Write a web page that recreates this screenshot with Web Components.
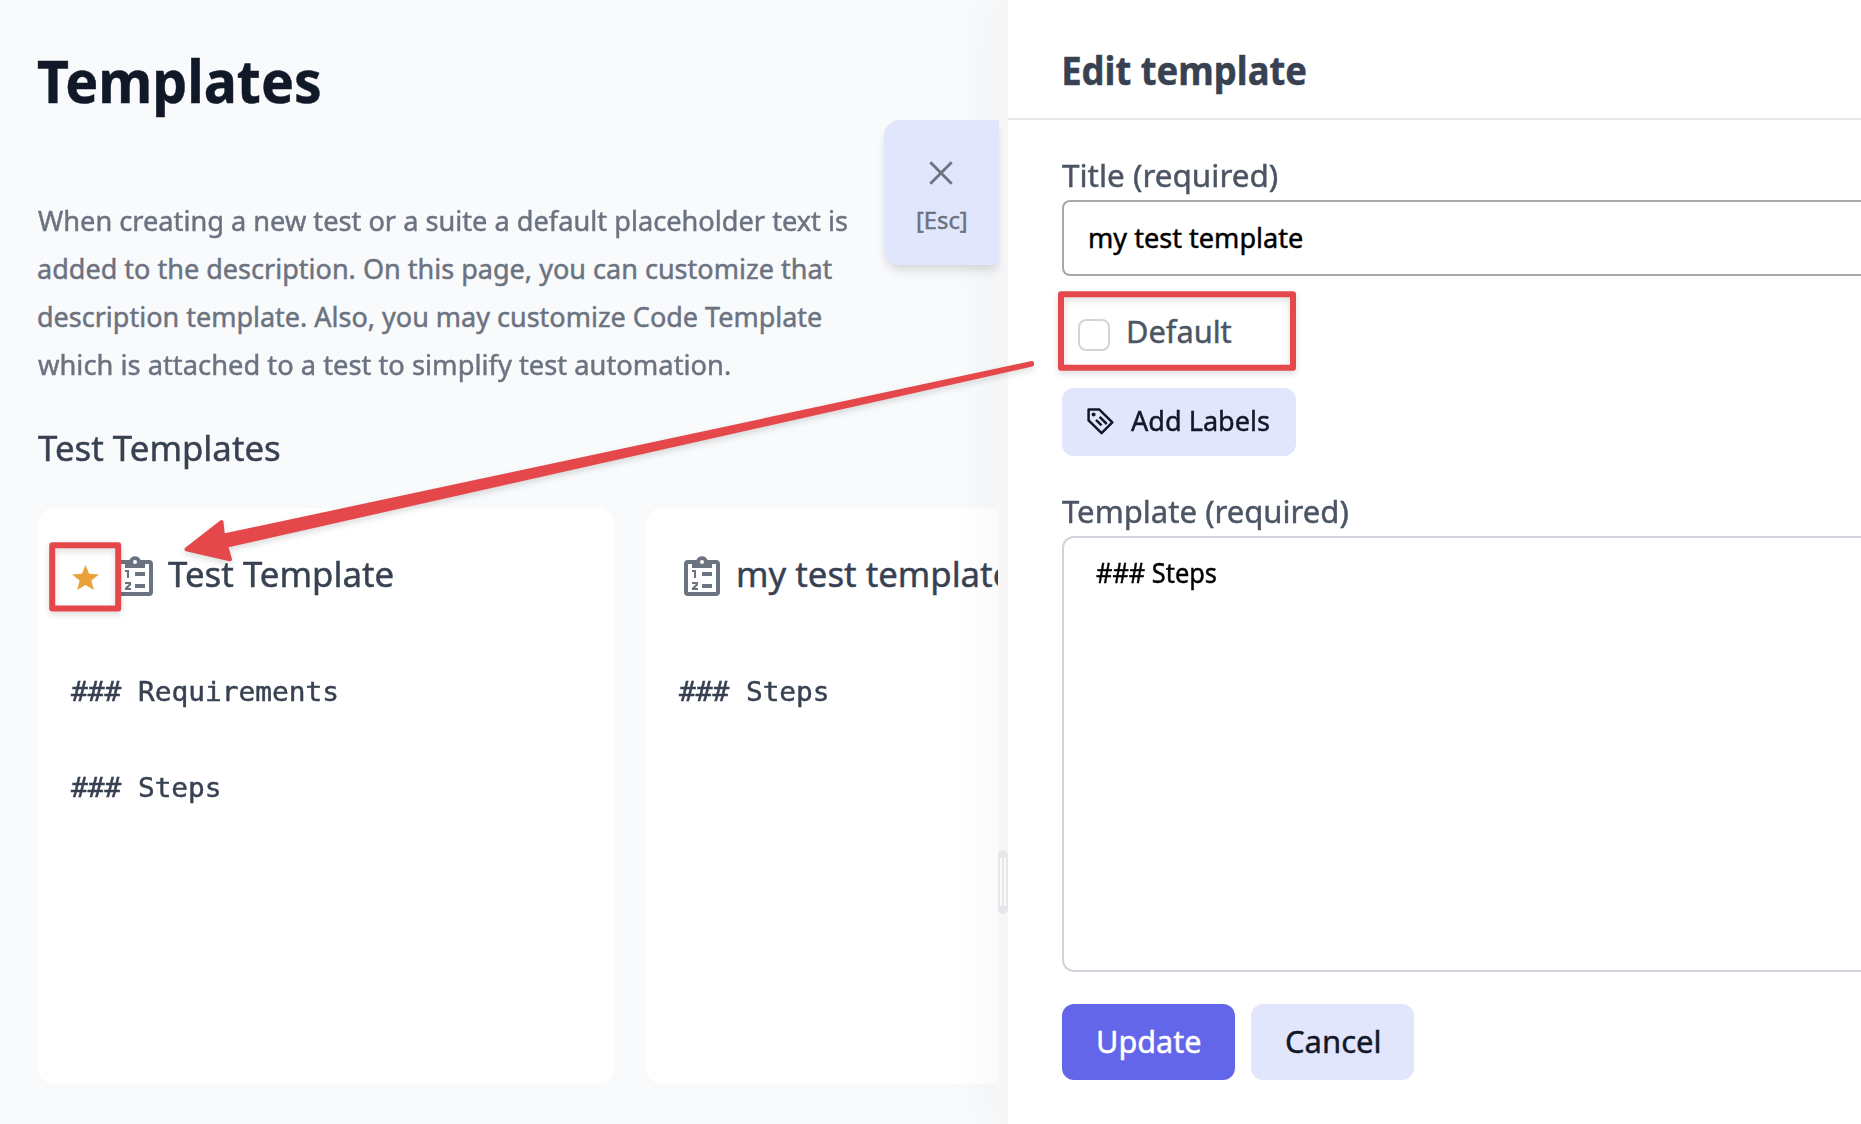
<!DOCTYPE html>
<html lang="en">
<head>
<meta charset="utf-8">
<title>Templates</title>
<style>
html,body{margin:0;height:100%;overflow:hidden;background:#f9fafc;font-family:"Noto Sans","Open Sans",sans-serif}
</style>
</head>
<body>
<templates-app></templates-app>
<script>
const define = (name, html, init) => {
  const tpl = document.createElement('template');
  tpl.innerHTML = html;
  customElements.define(name, class extends HTMLElement {
    connectedCallback() {
      if (this.shadowRoot) return;
      this.attachShadow({mode: 'open'}).append(tpl.content.cloneNode(true));
      if (init) init.call(this, this.shadowRoot);
    }
  });
};

/* One line of text whose inked area starts at the host's left edge and is `w` pixels wide. */
const pen = document.createElement('canvas').getContext('2d');
define('ui-text', `<style>
:host{display:block;white-space:pre;flex:none;-webkit-text-stroke:.45px currentColor}
span{display:inline-block;transform-origin:0 50%;vertical-align:top}
</style><span><slot></slot></span>`, function (root) {
  const w = +this.getAttribute('w'), size = +this.getAttribute('size');
  const weight = this.getAttribute('weight') || 400;
  const family = this.hasAttribute('mono') ? '"DejaVu Sans Mono", monospace' : '"Noto Sans", "Open Sans", sans-serif';
  this.style.cssText = `width:${w}px;font:${weight} ${size}px ${family};line-height:${this.getAttribute('lh')}px`;
  pen.font = `${weight} ${size}px ${family}`;
  const m = pen.measureText(this.textContent);
  const k = w / (m.actualBoundingBoxLeft + m.actualBoundingBoxRight);
  root.querySelector('span').style.transform = `translateX(${m.actualBoundingBoxLeft * k}px) scaleX(${k})`;
});

define('icon-clipboard', `<style>:host{display:block;width:36px;height:40px;flex:none;color:#6b7280}svg{display:block}</style>
<svg width="36" height="40" viewBox="0 0 36 40" fill="none">
<path fill="currentColor" fill-rule="evenodd" d="M4 4H12.4A6 6 0 0 1 23.6 4H32A4 4 0 0 1 36 8V36A4 4 0 0 1 32 40H4A4 4 0 0 1 0 36V8A4 4 0 0 1 4 4ZM18 4A2 2 0 1 0 18 8A2 2 0 1 0 18 4ZM4 8V36H32V8H28V12H8V8Z"/>
<path fill="currentColor" d="M18 16H28V20H18ZM18 28H28V32H18Z"/>
<path stroke="currentColor" stroke-width="2.1" d="M8 15H11V22M8 27H13V28.5L9 32.5V33H14"/>
</svg>`);

define('icon-star', `<style>:host{display:block;width:27px;height:25px;flex:none}svg{display:block}</style>
<svg width="27" height="25" viewBox="0 0 27 25"><path fill="#e9a23b" d="M13.5 0L17.1 8.8L27 9.5L19.4 15.6L21.8 25L13.5 19.9L5.2 25L7.6 15.6L0 9.5L9.9 8.8Z"/></svg>`);

define('icon-tag', `<style>:host{display:block;width:28px;height:28px;flex:none}svg{display:block}</style>
<svg width="28" height="28" viewBox="0 0 28 28" fill="none" stroke="#111827" stroke-width="2.5" stroke-linejoin="round">
<path d="M2.6 2.6H13.4L26.3 15.4L15.6 26.2L2.6 13.4Z"/><circle cx="7.6" cy="7.4" r="2" fill="#111827" stroke="none"/>
<path d="M10 12.8L15.6 18.4M13.6 9.8L20.8 17"/></svg>`);

define('icon-close', `<style>:host{display:block;width:24px;height:24px}svg{display:block}</style>
<svg width="24" height="24" viewBox="0 0 24 24" stroke="#6b7280" stroke-width="2.8"><path d="M1.3 1.3L22.7 22.7M22.7 1.3L1.3 22.7"/></svg>`);

define('template-card', `<style>
:host{display:block;box-sizing:border-box;width:576px;height:576px;flex:none;background:#fff;border-radius:16px;padding:42px 0 0 33px;color:#374151}
header{display:flex;height:48px;align-items:flex-start}
.body{margin-top:70.5px}
</style><header><slot name="title"></slot></header><div class="body"><slot></slot></div>`);

define('ui-button', `<style>
:host{display:flex;align-items:center;box-sizing:border-box;flex:none;border-radius:12px;background:#e1e6fd;color:#111827}
:host([primary]){background:#6366e9;color:#fff}
</style><slot></slot>`);

define('templates-page', `<style>
:host{display:block;box-sizing:border-box;width:998px;flex:none;overflow:hidden;padding:43.5px 0 0 38px}
.title{color:#111827}
.intro{margin-top:81.5px;color:#6b7280}
.sub{margin-top:35.4px;color:#374151}
.cards{display:flex;gap:32px;margin-top:35.6px}
icon-star{margin:15.5px 18px 0 1.3px}
.a{margin:6px 15px 0 0}
.b{margin:6px 18px 0 5px}
.gap{height:48px}
</style>
<ui-text class="title" w="281.5" size="58.5" weight="700" lh="72">Templates</ui-text>
<div class="intro">
<ui-text w="809" size="27.2" lh="48">When creating a new test or a suite a default placeholder text is</ui-text>
<ui-text w="794.5" size="27.2" lh="48">added to the description. On this page, you can customize that</ui-text>
<ui-text w="783" size="27.2" lh="48">description template. Also, you may customize Code Template</ui-text>
<ui-text w="692" size="27.2" lh="48">which is attached to a test to simplify test automation.</ui-text>
</div>
<ui-text class="sub" w="242" size="35" lh="48">Test Templates</ui-text>
<div class="cards">
<template-card>
<icon-star slot="title"></icon-star><icon-clipboard class="a" slot="title"></icon-clipboard>
<ui-text slot="title" w="224.5" size="35" lh="48">Test Template</ui-text>
<ui-text mono w="266" size="26.5" lh="48">### Requirements</ui-text>
<div class="gap"></div>
<ui-text mono w="148.5" size="26.5" lh="48">### Steps</ui-text>
</template-card>
<template-card>
<icon-clipboard class="b" slot="title"></icon-clipboard>
<ui-text slot="title" w="272.5" size="35" lh="48">my test template</ui-text>
<ui-text mono w="148.5" size="26.5" lh="48">### Steps</ui-text>
</template-card>
</div>`);

define('esc-tab', `<style>
:host{display:flex;flex-direction:column;align-items:center;box-sizing:border-box;width:115px;height:145px;padding:41px 1px 0 0;background:#e1e6fd;border-radius:16px 0 0 16px;color:#6b7280;
box-shadow:0 8px 12px -2px rgba(0,0,0,.1),0 4px 8px -2px rgba(0,0,0,.06)}
ui-text{margin-top:19px}
</style><icon-close></icon-close><ui-text w="49" size="23.3" lh="33">[Esc]</ui-text>`);

define('drag-gutter', `<style>
:host{display:flex;flex-direction:column;box-sizing:border-box;width:10px;flex:none;padding-top:850px;background:#f7f7f7;box-shadow:0 0 50px rgba(0,0,0,.12)}
.grip{display:flex;gap:2px;box-sizing:border-box;height:64px;padding:8px 2px;border-radius:5px;background:#e5e7eb}
i{width:2px;background:#fafafa}
</style><div class="grip"><i></i><i></i></div>`);

define('edit-panel', `<style>
:host{display:flex;flex-direction:column;flex:1;min-width:0;overflow:hidden;background:#fff;color:#4b5563}
header{box-sizing:border-box;height:120px;flex:none;padding:46px 0 0 56px;border-bottom:2px solid #e5e7eb;color:#374151}
.form{display:flex;flex-direction:column;align-items:flex-start;padding:34.7px 0 0 54px}
.field{box-sizing:border-box;align-self:stretch;border:2px solid #a8a8a8;border-right:0;color:#000}
.input{height:76px;margin-top:5.3px;border-radius:8px 0 0 8px;padding:12.5px 0 0 26px}
.area{height:436px;margin-top:5.3px;border-color:#d1d5db;border-radius:12px 0 0 12px;padding:11.5px 0 0 31.5px}
.check{display:flex;margin:34.7px 0 0 16px;height:40px;gap:19px}
.box{box-sizing:border-box;width:32px;height:32px;margin-top:8.3px;border:2px solid #d1d5db;border-radius:8px}
.labels{width:234px;height:68px;margin-top:37.3px;padding:0 0 1.6px 23.5px}
.labels ui-text{margin-left:17.5px}
.second{margin-top:34.7px}
footer{display:flex;gap:16px;margin-top:32px}
footer ui-button{height:76px}
</style>
<header><ui-text w="242" size="38.8" weight="700" lh="48">Edit template</ui-text></header>
<div class="form">
<ui-text w="216" size="31" lh="40">Title (required)</ui-text>
<div class="field input"><ui-text w="212" size="27.2" lh="48">my test template</ui-text></div>
<div class="check"><div class="box"></div><ui-text w="102.5" size="31" lh="40">Default</ui-text></div>
<ui-button class="labels"><icon-tag></icon-tag><ui-text w="138" size="27.2" lh="48">Add Labels</ui-text></ui-button>
<ui-text class="second" w="286.5" size="31" lh="40">Template (required)</ui-text>
<div class="field area"><ui-text w="120" size="27.2" lh="48">### Steps</ui-text></div>
<footer>
<ui-button primary style="width:173px;padding:0 0 1px 36px"><ui-text w="102" size="31" lh="40">Update</ui-text></ui-button>
<ui-button style="width:163px;padding:0 0 1px 35px"><ui-text w="93.5" size="31" lh="40">Cancel</ui-text></ui-button>
</footer>
</div>`);

define('callout-marks', `<style>:host{display:block;pointer-events:none}svg{display:block;filter:drop-shadow(0 3px 3px rgba(0,0,0,.14))}</style>
<svg width="1861" height="1124" viewBox="0 0 1861 1124" fill="none" stroke="#e5484b" stroke-linejoin="round">
<rect x="52.2" y="545.2" width="66" height="63.4" stroke-width="6"/>
<rect x="1061" y="294.3" width="232" height="73.4" stroke-width="6"/>
<path fill="#e5484b" stroke-width="4" d="M186.5 549.3L221.5 522L222.9 535.7L500 476.8L1032 363L1032 364.5L500 484L226 545.8L230 559.3Z"/>
</svg>`);

define('templates-app', `<style>
:host{display:flex;position:relative;width:1861px;height:1124px;overflow:hidden;background:#f9fafc}
esc-tab{position:absolute;left:884px;top:120px}
callout-marks{position:absolute;left:0;top:0}
</style>
<templates-page></templates-page><drag-gutter></drag-gutter><edit-panel></edit-panel>
<esc-tab></esc-tab><callout-marks></callout-marks>`);
</script>
</body>
</html>
